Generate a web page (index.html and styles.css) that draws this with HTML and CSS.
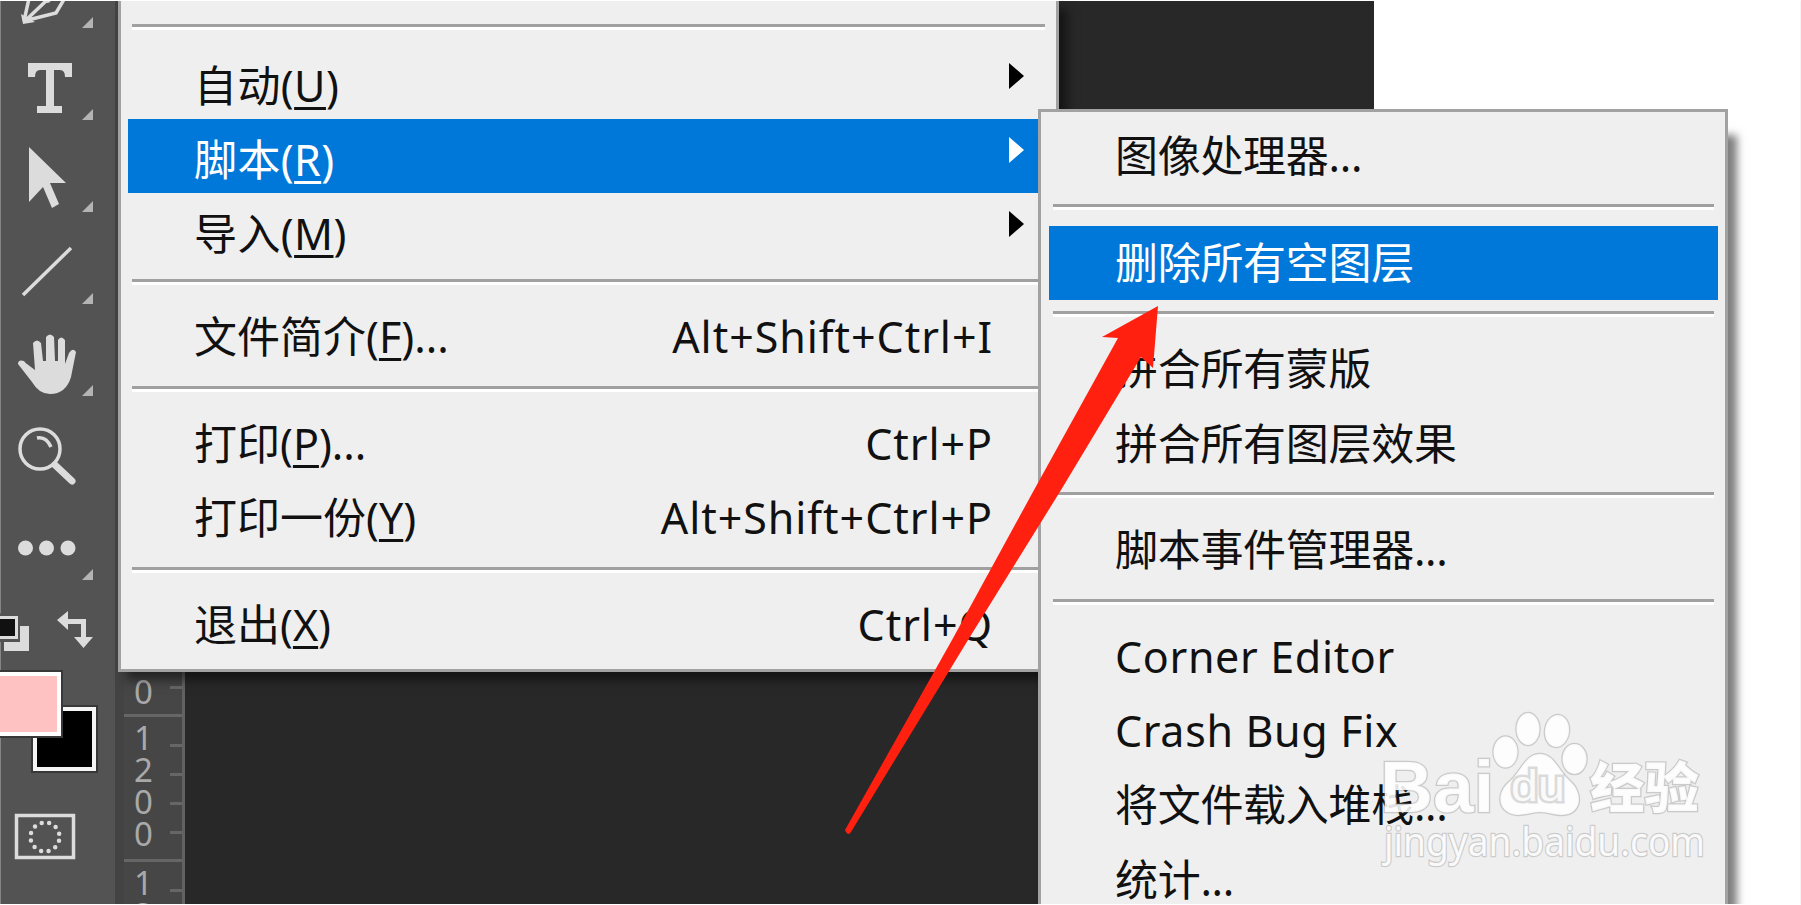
FILE: index.html
```html
<!DOCTYPE html>
<html lang="zh-CN">
<head>
<meta charset="UTF-8">
<meta name="viewport" content="width=device-width, initial-scale=1.0">
<title>脚本 - 删除所有空图层</title>
<link rel="stylesheet" href="styles.css">
</head>
<body>
<div class="screen">
    <div class="app">
        <div class="toolbar">
            <svg class="tool" viewBox="0 -61 114 92">
                <path class="line" d="M24 21L30 -6M24 21L56 13L66 -4M26 20L46 1"/>
                <circle class="fill" cx="47" cy="-1" r="4"/>
                <path class="fill" d="M21 14L35 22L23 24z"/>
                <path class="corner" d="M93 17v11H82z"/>
            </svg>
            <svg class="tool" viewBox="0 31 114 92">
                <path class="fill" d="M28 63H72V77H65Q65 70 60 70H54V106H62V113H37V106H46V70H40Q35 70 35 77H28z"/>
                <path class="corner" d="M93 109v11H82z"/>
            </svg>
            <svg class="tool" viewBox="0 123 114 92">
                <path class="fill" d="M29 147L66 183H50L59 204L52 208L43 187L29 202z"/>
                <path class="corner" d="M93 201v11H82z"/>
            </svg>
            <svg class="tool" viewBox="0 215 114 92">
                <path class="line" d="M23 295L71 248"/>
                <path class="corner" d="M93 293v11H82z"/>
            </svg>
            <svg class="tool" viewBox="0 307 114 92">
                <path class="fill" d="M32 371L19 364Q17 361 23 361L35 370L33 343Q37 338 41 343L43 361H46V337Q50 332 54 337L55 361H58V340Q61 335 65 340V364L69 353Q73 347 76 352L71 377Q66 394 50 394Q39 394 32 382L18 364Q18 359 24 361z"/>
                <path class="corner" d="M93 385v11H82z"/>
            </svg>
            <svg class="tool" viewBox="0 399 114 92">
                <circle class="line" cx="40" cy="449" r="20"/>
                <path class="line" d="M37 438Q46 436 51 447"/>
                <path class="handle" d="M55 465L72 481"/>
            </svg>
            <svg class="tool" viewBox="0 491 114 92">
                <circle class="fill" cx="25.500" cy="548" r="7.500"/>
                <circle class="fill" cx="46.500" cy="548" r="7.500"/>
                <circle class="fill" cx="68" cy="548" r="7.500"/>
                <path class="corner" d="M93 569v11H82z"/>
            </svg>
            <!-- 前景色 / 背景色 -->
            <svg class="swatches" viewBox="0 583 114 322">
                <path class="fill" d="M4 626H29V651H4z"/>
                <path d="M0 613.500H20V642H0z" fill="#535353"/>
                <path class="fill" d="M4 642H29V651H4zM20 626H29V651H20z"/>
                <path class="fill" d="M0 616H18V639H0z"/>
                <path d="M0 619H15V636H0z" fill="#111"/>
                <path class="fill" d="M57 620L68 611V619H86V637H93L83.500 648L74 637H81V624H68V630z"/>
                <path d="M31 705H98V773H31z" fill="#383838"/>
                <path d="M33 707H96V771H33z" fill="#f5f5f5"/>
                <path d="M37 711H92V767H37z" fill="#000"/>
                <path d="M0 670H63V738H0z" fill="#383838"/>
                <path d="M0 672H61V736H0z" fill="#fff"/>
                <path d="M0 676H57V732H0z" fill="#ffc2c2"/>
                <rect class="line" x="16.500" y="815.500" width="57" height="42"/>
                <circle class="dots" cx="45" cy="837" r="14.500"/>
            </svg>
        </div>
        <div class="ruler">
            <div class="ruler-cell first">
                <div class="digits"><span>0</span></div>
                <div class="ticks"><i></i></div>
            </div>
            <div class="ruler-cell">
                <div class="digits"><span>1</span><span>2</span><span>0</span><span>0</span></div>
                <div class="ticks"><i></i><i></i><i></i><i></i></div>
            </div>
            <div class="ruler-cell">
                <div class="digits"><span>1</span><span>3</span></div>
                <div class="ticks"><i></i></div>
            </div>
        </div>
        <div class="canvas"></div>
    </div>

    <div class="menu main-menu">
        <div class="separator"></div>
        <div class="item low">自动(<u>U</u>)<b class="arrow"></b></div>
        <div class="item low active">脚本(<u>R</u>)<b class="arrow"></b></div>
        <div class="item low">导入(<u>M</u>)<b class="arrow"></b></div>
        <div class="separator"></div>
        <div class="item">文件简介(<u>F</u>)...<span class="key">Alt+Shift+Ctrl+I</span></div>
        <div class="separator"></div>
        <div class="item">打印(<u>P</u>)...<span class="key">Ctrl+P</span></div>
        <div class="item">打印一份(<u>Y</u>)<span class="key">Alt+Shift+Ctrl+P</span></div>
        <div class="separator"></div>
        <div class="item">退出(<u>X</u>)<span class="key">Ctrl+Q</span></div>
    </div>

    <div class="menu sub-menu">
        <div class="item">图像处理器...</div>
        <div class="separator"></div>
        <div class="item active">删除所有空图层</div>
        <div class="separator"></div>
        <div class="item">拼合所有蒙版</div>
        <div class="item">拼合所有图层效果</div>
        <div class="separator"></div>
        <div class="item">脚本事件管理器...</div>
        <div class="separator"></div>
        <div class="item latin">Corner Editor</div>
        <div class="item latin">Crash Bug Fix</div>
        <div class="item">将文件载入堆栈...</div>
        <div class="item">统计...</div>
    </div>

    <!-- 红色箭头 -->
    <svg class="pointer" viewBox="840 300 330 540">
        <path d="M1158 306L1153 368L1141 357L1061 490L968 640L851 832Q848 837 845 830L952 640L1034 490L1118 338L1102 337z"/>
    </svg>

    <svg class="watermark" viewBox="1370 700 350 180">
        <text class="bai" x="1380" y="812" textLength="114" lengthAdjust="spacingAndGlyphs">Bai</text>
        <ellipse cx="1505.500" cy="752" rx="12" ry="15.500"/>
        <ellipse cx="1528" cy="729" rx="11.500" ry="16"/>
        <ellipse cx="1557" cy="731" rx="12" ry="16" transform="rotate(8 1557 731)"/>
        <ellipse cx="1574.500" cy="759" rx="12" ry="15"/>
        <path d="M1540 754C1554 754 1558 770 1569 780C1585 794 1581 815 1562 815C1554 815 1548 812 1540 812C1532 812 1526 815 1518 815C1498 814 1495 794 1509 782C1521 772 1525 754 1540 754z"/>
        <text class="du" x="1511" y="801" textLength="54" lengthAdjust="spacingAndGlyphs">du</text>
        <text class="jingyan" x="1590" y="808" textLength="109" lengthAdjust="spacingAndGlyphs">经验</text>
        <text class="url" x="1384" y="855.500" textLength="321" lengthAdjust="spacingAndGlyphs">jingyan.baidu.com</text>
    </svg>
</div>
</body>
</html>
```

FILE: styles.css
```css
body {
    margin: 0;
    background: #fff;
    font-family: "Noto Sans", "Noto Sans CJK SC", sans-serif;
}
.screen {
    position: relative;
    box-sizing: border-box;
    width: 1801px;
    height: 905px;
    overflow: hidden;
    border-top: 1px solid #fff;
    border-bottom: 1px solid #fff;
    border-right: 1px solid #f4f4f4;
}
.app {
    display: flex;
    width: 1374px;
    height: 903px;
    background: #282828;
}

/* 工具栏 */
.toolbar {
    display: flex;
    flex-direction: column;
    box-sizing: border-box;
    flex: none;
    width: 124px;
    overflow: hidden;
    background: #535353;
    border-right: 9px solid #434343;
    box-shadow: inset 1px 0 #858585;
}
.tool {
    flex: none;
    width: 114px;
    height: 92px;
}
.tool:first-child {
    margin-top: -62px;
}
.swatches {
    flex: none;
    width: 114px;
    height: 322px;
}
.fill {
    fill: #dcdcdc;
}
.line {
    fill: none;
    stroke: #dcdcdc;
    stroke-width: 3.5;
}
.handle {
    fill: none;
    stroke: #dcdcdc;
    stroke-width: 7;
    stroke-linecap: round;
}
.corner {
    fill: #b4b4b4;
}
.dots {
    fill: none;
    stroke: #dcdcdc;
    stroke-width: 4.5;
    stroke-linecap: round;
    stroke-dasharray: 0 7.592;
    stroke-dashoffset: 3.8;
}

/* 标尺 */
.ruler {
    display: flex;
    flex-direction: column;
    box-sizing: border-box;
    flex: none;
    width: 61px;
    padding-top: 571px;
    overflow: hidden;
    background: #464646;
    border-right: 3px solid #626262;
}
.ruler-cell {
    display: flex;
    justify-content: space-between;
    box-sizing: border-box;
    flex: none;
    height: 145px;
    padding: 5px 0 0 10px;
    border-bottom: 3px solid #666;
}
.ruler-cell.first {
    padding-top: 104px;
}
.digits {
    display: flex;
    flex-direction: column;
    font-family: "Noto Sans", sans-serif;
    font-size: 33px;
    line-height: 32px;
    color: #a9a9a9;
}
.digits span {
    height: 32px;
}
.ticks {
    display: flex;
    flex-direction: column;
    gap: 26px;
    width: 12px;
    padding-top: 22px;
}
.first .ticks {
    padding-top: 10px;
}
.ticks i {
    height: 3px;
    background: #666;
}
.canvas {
    flex: 1;
    background: #282828;
}

/* 菜单 */
.menu {
    position: absolute;
    box-sizing: border-box;
    background: #efefef;
    border: 3px solid #a2a2a2;
}
.main-menu {
    left: 118px;
    top: 0;
    width: 941px;
    height: 671px;
    padding: 11.5px 7px 0;
    border-top: 0;
    box-shadow: 8px 8px 10px rgba(0, 0, 0, 0.5);
}
.sub-menu {
    left: 1038px;
    top: 108px;
    width: 690px;
    height: 850px;
    padding: 7px 7px 0 8px;
    box-shadow: 9px 26px 8px rgba(0, 0, 0, 0.5);
}
.item {
    display: flex;
    align-items: center;
    height: 74.4px;
    padding: 0 56px 0 66px;
    font-size: 43px;
    line-height: 74.4px;
    color: #111;
    white-space: pre;
}
.sub-menu .item {
    letter-spacing: -0.3px;
}
.sub-menu .latin {
    letter-spacing: 0.65px;
}
.item.low {
    line-height: 82px;
    letter-spacing: 0.4px;
    align-items: flex-start;
}
.item.active {
    background: #0078d9;
    color: #fff;
}
.item u {
    text-decoration-thickness: 3px;
    text-underline-offset: 5px;
}
.key {
    margin-left: auto;
    letter-spacing: 0.95px;
}
.arrow {
    width: 0;
    height: 0;
    margin: 18px -31px 0 auto;
    border: 13px solid transparent;
    border-left: 15px solid #000;
    border-right: 0;
}
.active .arrow {
    border-left-color: #fff;
}
.separator {
    box-sizing: border-box;
    height: 32.2px;
    padding-top: 11.5px;
    margin: 0 4px;
}
.sub-menu .separator {
    padding-top: 11px;
}
.separator::before {
    content: "";
    display: block;
    height: 3px;
    background: #a0a0a0;
    border-bottom: 3px solid #fff;
}

.pointer {
    position: absolute;
    left: 840px;
    top: 299px;
    width: 330px;
    height: 540px;
    fill: #ff2010;
}

/* 水印 */
.watermark {
    position: absolute;
    left: 1370px;
    top: 699px;
    width: 350px;
    height: 180px;
    fill: #fff;
    fill-opacity: 0.88;
    stroke: #888;
    stroke-opacity: 0.35;
    stroke-width: 2.5;
    paint-order: stroke;
}
.bai {
    font: bold 72px "Liberation Sans", sans-serif;
}
.du {
    font: 44px "Liberation Sans", sans-serif;
    stroke-width: 5;
    stroke: #999;
}
.jingyan {
    font: 900 54px "Noto Sans CJK SC", sans-serif;
}
.url {
    font: 40px "Noto Sans", sans-serif;
}
```
